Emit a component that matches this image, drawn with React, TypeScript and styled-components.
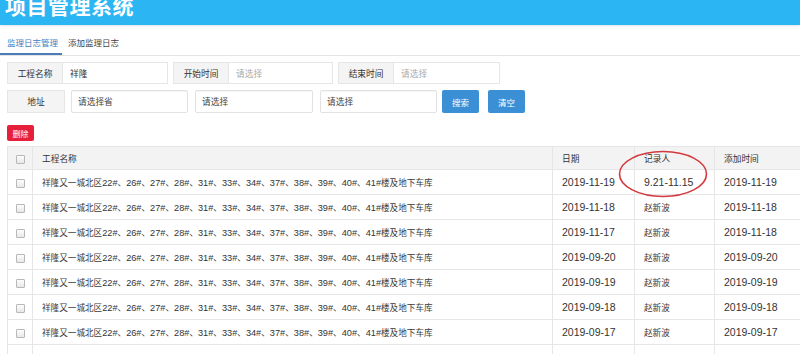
import styled, { createGlobalStyle } from 'styled-components';

const GlobalStyle = createGlobalStyle`
  html, body {
    margin: 0;
    padding: 0;
    background: #fff;
    overflow: hidden;
  }
  body {
    font-family: "Liberation Sans", "Noto Sans CJK SC", sans-serif;
    font-size: 11px;
    color: #333;
  }
`;

const projectName =
  '祥隆又一城北区22#、26#、27#、28#、31#、33#、34#、37#、38#、39#、40#、41#楼及地下车库';

const rows = [
  { date: '2019-11-19', recorder: '9.21-11.15', added: '2019-11-19' },
  { date: '2019-11-18', recorder: '赵新波', added: '2019-11-18' },
  { date: '2019-11-17', recorder: '赵新波', added: '2019-11-18' },
  { date: '2019-09-20', recorder: '赵新波', added: '2019-09-20' },
  { date: '2019-09-19', recorder: '赵新波', added: '2019-09-19' },
  { date: '2019-09-18', recorder: '赵新波', added: '2019-09-18' },
  { date: '2019-09-17', recorder: '赵新波', added: '2019-09-17' },
];

// chinese glyphs render smaller than latin ones in the original table
const Mixed = ({ text }: { text: string }) => (
  <>
    {text.split(/([\u3000-\u303f\u4e00-\u9fff\uff00-\uffef]+)/).map((part, i) =>
      i % 2 === 1 ? <Cjk key={i}>{part}</Cjk> : part
    )}
  </>
);

const App = () => {
  return (
    <Page>
      <GlobalStyle />
      <Header>
        <Title>项目管理系统</Title>
      </Header>

      <TabBar>
        <Tab active={true}>监理日志管理</Tab>
        <Tab active={false}>添加监理日志</Tab>
      </TabBar>

      <Content>
        <FormRow>
          <FieldGroup>
            <FieldLabel w={56}>工程名称</FieldLabel>
            <FieldInput w={105}>祥隆</FieldInput>
          </FieldGroup>
          <FieldGroup>
            <FieldLabel w={56}>开始时间</FieldLabel>
            <FieldInput w={104} placeholder>请选择</FieldInput>
          </FieldGroup>
          <FieldGroup>
            <FieldLabel w={56}>结束时间</FieldLabel>
            <FieldInput w={106} placeholder>请选择</FieldInput>
          </FieldGroup>
        </FormRow>

        <AddressRow>
          <FieldLabel w={58}>地址</FieldLabel>
          <SelectBox w={117}>请选择省</SelectBox>
          <SelectBox w={118}>请选择</SelectBox>
          <SelectBox w={117}>请选择</SelectBox>
          <Buttons>
            <BlueButton>搜索</BlueButton>
            <BlueButton>清空</BlueButton>
          </Buttons>
        </AddressRow>

        <DeleteButton>删除</DeleteButton>

        <Table>
          <thead>
            <tr>
              <CheckCell as="th">
                <Check />
              </CheckCell>
              <Th w={520}>工程名称</Th>
              <Th w={82}>日期</Th>
              <Th w={80}>记录人</Th>
              <Th w={100}>添加时间</Th>
            </tr>
          </thead>
          <tbody>
            {rows.map((r, i) => (
              <tr key={i}>
                <CheckCell>
                  <Check />
                </CheckCell>
                <Td compact>
                  <Mixed text={projectName} />
                </Td>
                <Td>{r.date}</Td>
                <Td>
                  <Mixed text={r.recorder} />
                </Td>
                <Td>{r.added}</Td>
              </tr>
            ))}
            <tr>
              <CheckCell />
              <Td />
              <Td />
              <Td />
              <Td />
            </tr>
          </tbody>
        </Table>
      </Content>

      <Annotation viewBox="0 0 90 48">
        <ellipse cx="45" cy="24" rx="43.5" ry="22.5" fill="none" stroke="#d23a3f" strokeWidth="1.6" />
      </Annotation>
    </Page>
  );
};

export default App;

const Page = styled.div`
  position: relative;
  width: 800px;
  height: 354px;
  overflow: hidden;
`;

const Header = styled.div`
  height: 25px;
  background: #2bb5f3;
  display: flex;
  align-items: flex-end;
  overflow: hidden;
  padding-left: 5px;
  box-shadow: 0 1px 2px rgba(0, 0, 0, 0.12);
`;

const Title = styled.h1`
  margin: 0;
  font-size: 21px;
  line-height: 21px;
  padding-bottom: 8px;
  font-weight: 700;
  color: #fff;
  letter-spacing: 0.5px;
`;

const TabBar = styled.div`
  display: flex;
  padding-top: 8px;
  border-bottom: 1px solid #e3e3e3;
`;

const Tab = styled.div<{ active: boolean }>`
  height: 20px;
  line-height: 20px;
  padding: ${(p) => (p.active ? '0 4px 0 7px' : '0 6px')};
  font-size: 8.5px;
  color: ${(p) => (p.active ? '#3f7fc0' : '#444')};
  border-bottom: 2px solid ${(p) => (p.active ? '#4a7db8' : 'transparent')};
`;

const Content = styled.div`
  padding: 6px 0 0 7px;
`;

const FormRow = styled.div`
  display: flex;
  gap: 5px;
  height: 22px;
`;

const FieldGroup = styled.div`
  display: flex;
`;

const FieldLabel = styled.div<{ w: number }>`
  width: ${(p) => p.w}px;
  box-sizing: border-box;
  display: flex;
  align-items: center;
  justify-content: center;
  background: #f4f4f4;
  border: 1px solid #e6e6e6;
  font-size: 8.7px;
  color: #333;
`;

const FieldInput = styled.div<{ w: number; placeholder?: boolean }>`
  width: ${(p) => p.w}px;
  box-sizing: border-box;
  display: flex;
  align-items: center;
  padding-left: 7px;
  border: 1px solid #e6e6e6;
  border-left: none;
  background: #fff;
  font-size: 8.7px;
  color: ${(p) => (p.placeholder ? '#aaa' : '#333')};
`;

const AddressRow = styled.div`
  display: flex;
  gap: 6px;
  height: 23px;
  margin-top: 6px;
`;

const SelectBox = styled.div<{ w: number }>`
  width: ${(p) => p.w}px;
  box-sizing: border-box;
  display: flex;
  align-items: center;
  padding-left: 6px;
  border: 1px solid #e2e2e2;
  border-radius: 2px;
  box-shadow: inset 0 1px 1px rgba(0, 0, 0, 0.04);
  font-size: 8.7px;
  color: #444;
  & + & {
    margin-left: 1px;
  }
`;

const Buttons = styled.div`
  display: flex;
  gap: 9px;
  margin-left: -1px;
`;

const BlueButton = styled.button`
  width: 37px;
  height: 23px;
  padding: 0;
  border: none;
  border-radius: 2px;
  background: #3a8fd5;
  color: #fff;
  font-family: inherit;
  font-size: 8.5px;
`;

const DeleteButton = styled.button`
  display: block;
  margin-top: 12px;
  width: 27px;
  height: 16px;
  padding: 0;
  border: none;
  border-radius: 2px;
  background: #e6203a;
  color: #fff;
  font-family: inherit;
  font-size: 8px;
`;

const Table = styled.table`
  margin-top: 5px;
  border-collapse: collapse;
  table-layout: fixed;
  width: 807px;
`;

const Th = styled.th<{ w: number }>`
  width: ${(p) => p.w}px;
  height: 23px;
  box-sizing: border-box;
  padding: 0 0 0 9px;
  text-align: left;
  font-weight: 400;
  font-size: 8.7px;
  color: #333;
  background: #f3f3f3;
  border: 1px solid #e6e6e6;
`;

const Td = styled.td<{ compact?: boolean }>`
  height: 25px;
  box-sizing: border-box;
  padding: 0 0 0 9px;
  font-size: ${(p) => (p.compact ? '9.2px' : '10.5px')};
  color: #333;
  white-space: nowrap;
  overflow: hidden;
  border: 1px solid #e6e6e6;
`;

const Cjk = styled.span`
  font-size: 8.6px;
  color: #3a3a3a;
`;

const CheckCell = styled.td`
  width: 25px;
  height: 25px;
  box-sizing: border-box;
  padding: 0;
  text-align: center;
  border: 1px solid #e6e6e6;
  thead & {
    height: 23px;
    background: #f3f3f3;
  }
`;

const Check = styled.span`
  display: inline-block;
  width: 7px;
  height: 7px;
  border: 1px solid #b8b8b8;
  border-radius: 1px;
  background: linear-gradient(#fdfdfd, #e8e8e8);
  vertical-align: middle;
`;

const Annotation = styled.svg`
  position: absolute;
  left: 618px;
  top: 150px;
  width: 90px;
  height: 48px;
  pointer-events: none;
`;
